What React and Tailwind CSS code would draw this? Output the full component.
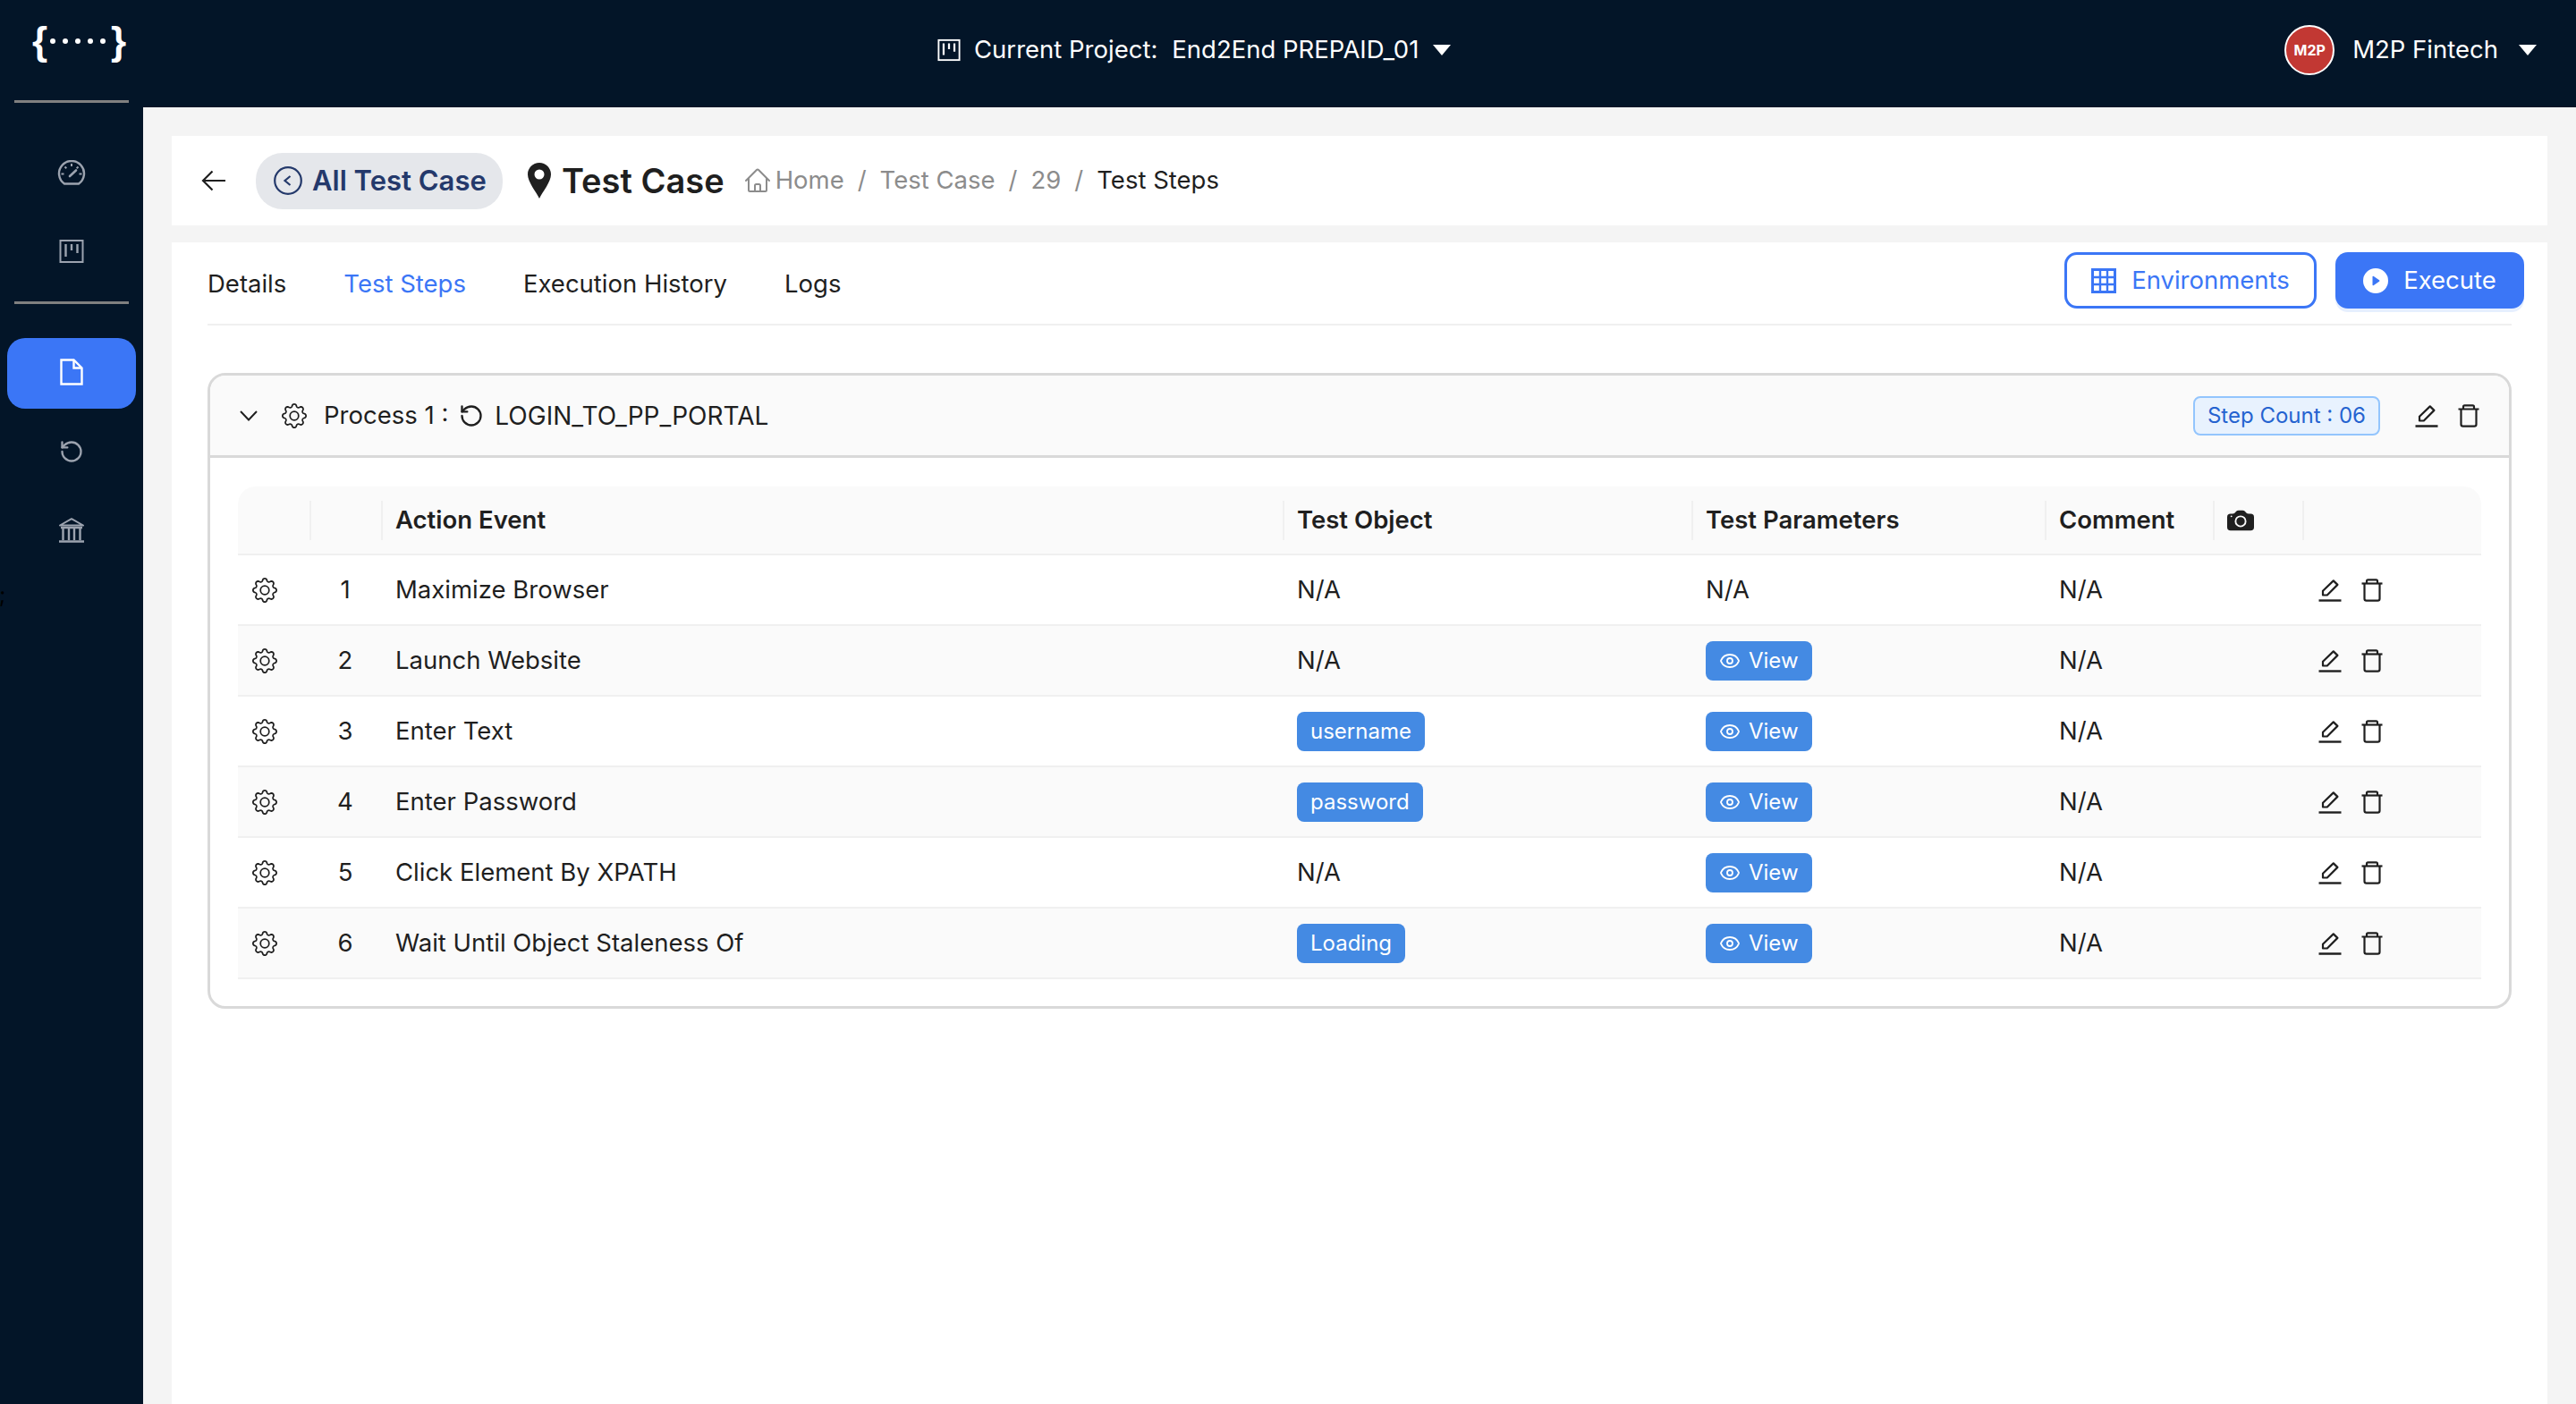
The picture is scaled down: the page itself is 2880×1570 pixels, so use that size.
import { Eye, RotateCcw } from "lucide-react";
import { BsCameraFill, BsGear, BsPlayCircleFill } from "react-icons/bs";
import { HiOutlineHome } from "react-icons/hi2";

const gridCols = "grid grid-cols-[80px_80px_1008px_457px_395px_188px_100px_201px]";

const steps = [
  { id: 1, action: "Maximize Browser", object: null, params: false },
  { id: 2, action: "Launch Website", object: null, params: true },
  { id: 3, action: "Enter Text", object: "username", params: true },
  { id: 4, action: "Enter Password", object: "password", params: true },
  { id: 5, action: "Click Element By XPATH", object: null, params: true },
  { id: 6, action: "Wait Until Object Staleness Of", object: "Loading", params: true },
];

const GaugeIcon = ({ className }) => (
  <svg viewBox="0 0 32 28" className={className} fill="none" stroke="currentColor" strokeWidth="2.4">
    <path d="M8 26.5A14 14 0 1 1 24 26.5Z" strokeLinejoin="round" />
    <path d="M16 4v3M8.5 7.5l1.8 1.8M23.5 7.5l-1.8 1.8M4.5 15.5h3M24.5 15.5h3" strokeWidth="2" />
    <path d="M14 18l7-6.5" strokeWidth="2.6" strokeLinecap="round" />
  </svg>
);

const KanbanIcon = ({ className }) => (
  <svg viewBox="0 0 28 28" className={className} fill="none" stroke="currentColor" strokeWidth="2">
    <rect x="1.5" y="2" width="25" height="24" />
    <path d="M7.5 6v14M14 6v7M20.5 6v10" strokeWidth="2.4" />
  </svg>
);

const FileIcon = ({ className }) => (
  <svg viewBox="0 0 26 30" className={className} fill="none" stroke="currentColor" strokeWidth="2.4">
    <path d="M1.5 1.5h14l9 9v18h-23z" />
    <path d="M15.5 1.5v9h9" />
  </svg>
);

const BankIcon = ({ className }) => (
  <svg viewBox="0 0 30 28" className={className} fill="none" stroke="currentColor">
    <path d="M15 1.2L28 8.5H2z" strokeWidth="2" strokeLinejoin="round" />
    <path d="M3 11h24M1 26.5h28" strokeWidth="2.4" />
    <path d="M5.5 11v14M12 11v14M18 11v14M24.5 11v14" strokeWidth="2.4" />
  </svg>
);

const EditIcon = ({ className }) => (
  <svg viewBox="0 0 26 26" className={className} fill="none" stroke="currentColor" strokeWidth="2.2">
    <path d="M5 18.5v-4.8L16.8 2.4l4.6 4.5L9.8 18.5z" strokeLinejoin="round" />
    <path d="M0.5 24.5h25" strokeWidth="2.4" />
  </svg>
);

const TrashIcon = ({ className }) => (
  <svg viewBox="0 0 24 26" className={className} fill="none" stroke="currentColor" strokeWidth="2.2">
    <path d="M0.5 5.5h23" />
    <path d="M6 5.5V2.8c0-.9.6-1.5 1.5-1.5h9c.9 0 1.5.6 1.5 1.5v2.7" />
    <path d="M3.5 5.5v17c0 1.4.9 2.2 2.2 2.2h12.6c1.3 0 2.2-.8 2.2-2.2v-17" />
  </svg>
);

const TableIcon = ({ className }) => (
  <svg viewBox="0 0 28 28" className={className} fill="none" stroke="currentColor">
    <rect x="1.5" y="1.5" width="25" height="25" strokeWidth="3" />
    <path d="M1 10h26M1 18h26M10 1v26M18 1v26" strokeWidth="2.4" />
  </svg>
);

const CircleBackIcon = ({ className }) => (
  <svg viewBox="0 0 32 32" className={className} fill="none" stroke="currentColor" strokeWidth="2.2">
    <circle cx="16" cy="16" r="14.8" />
    <path d="M18.5 11l-6 5 6 5" />
  </svg>
);

const ArrowIcon = ({ className }) => (
  <svg viewBox="0 0 28 24" className={className} fill="none" stroke="currentColor" strokeWidth="2.2">
    <path d="M27 12H2M12.5 1.5L2 12l10.5 10.5" />
  </svg>
);

const ChevronIcon = ({ className }) => (
  <svg viewBox="0 0 20 12" className={className} fill="none" stroke="currentColor" strokeWidth="2">
    <path d="M1 1l9 9.5L19 1" />
  </svg>
);

const PinIcon = ({ className }) => (
  <svg viewBox="0 0 26 40" className={className} fill="currentColor">
    <path fillRule="evenodd" d="M13 0C5.8 0 0 5.8 0 13c0 8.5 9.5 19.5 13 27 3.5-7.5 13-18.5 13-27C26 5.8 20.2 0 13 0zm0 7.5a5.5 5.5 0 1 1 0 11 5.5 5.5 0 0 1 0-11z" />
  </svg>
);

const Caret = ({ className }) => <span className={`block h-0 w-0 border-x-[10px] border-t-[12px] border-x-transparent border-t-white ${className}`} />;

const Pill = ({ children }) => (
  <span className="flex h-[44px] items-center gap-[9px] rounded-lg bg-[#448ae3] px-[15px] text-[24px] text-white">{children}</span>
);

function Sidebar() {
  const navClass = "flex h-[79px] items-center justify-center rounded-[20px] pb-[2px] text-[#9ca3af]";
  return (
    <aside className="relative flex w-[160px] shrink-0 flex-col bg-[#031528] px-[8px]">
      <div className="flex h-[112px] items-start pl-[28px] pt-[24px] font-['Liberation_Sans',sans-serif] text-white">
        <div className="flex h-[44px] items-center gap-[8px]">
          <span className="-mr-[2px] w-[14px] text-[44px] font-bold leading-none">{"{"}</span>
          {[0, 1, 2, 3, 4].map((dot) => (
            <span key={dot} className="h-[6px] w-[6px] rounded-full bg-white" />
          ))}
          <span className="-ml-[2px] w-[14px] text-[44px] font-bold leading-none">{"}"}</span>
        </div>
      </div>
      <div className="mx-[8px] h-[3px] bg-[#808080]" />
      <nav className="mt-[39px] flex flex-col gap-[9px]">
        <div className={navClass}><GaugeIcon className="h-[28px] w-[32px]" /></div>
        <div className={navClass}><KanbanIcon className="h-[28px] w-[28px]" /></div>
      </nav>
      <div className="mx-[8px] mt-[16px] h-[3px] bg-[#808080]" />
      <nav className="mt-[38px] flex flex-col gap-[9px]">
        <div className="flex h-[79px] items-center justify-center rounded-[20px] bg-[#3b76f6] pb-[3px] text-white"><FileIcon className="h-[32px] w-[26px]" /></div>
        <div className={navClass}><RotateCcw className="h-[28px] w-[28px]" strokeWidth={2} /></div>
        <div className={navClass}><BankIcon className="h-[28px] w-[30px]" /></div>
      </nav>
      <span className="absolute left-[-1px] top-[648px] text-[24px] text-black">;</span>
    </aside>
  );
}

function Header() {
  return (
    <header className="flex h-[120px] shrink-0 items-center justify-between bg-[#031528] pb-[8px] pl-[888px] pr-[44px] text-[27.5px] text-white">
      <div className="flex items-center">
        <KanbanIcon className="h-[26px] w-[26px]" />
        <span className="ml-[15px]">Current Project:</span>
        <span className="ml-[16px]">End2End PREPAID_01</span>
        <Caret className="ml-[16px]" />
      </div>
      <div className="flex items-center">
        <div className="flex h-[56px] w-[56px] items-center justify-center rounded-full border-2 border-white bg-[#c23833] text-[16px] font-bold">M2P</div>
        <span className="ml-[20px]">M2P Fintech</span>
        <Caret className="ml-[23px]" />
      </div>
    </header>
  );
}

function Breadcrumb() {
  return (
    <div className="ml-[21px] flex items-center text-[27.5px] text-[#8c8c8c]">
      <HiOutlineHome className="h-[32px] w-[32px]" />
      <span className="ml-[4px]">Home</span>
      <span className="mx-[15px]">/</span>
      <span>Test Case</span>
      <span className="mx-[15px]">/</span>
      <span>29</span>
      <span className="mx-[15px]">/</span>
      <span className="text-[#1f1f1f]">Test Steps</span>
    </div>
  );
}

function TopBar() {
  return (
    <div className="flex h-[100px] shrink-0 items-center bg-white pl-[33px]">
      <ArrowIcon className="h-[24px] w-[28px] text-[#1f1f1f]" />
      <div className="ml-[33px] flex h-[63px] w-[276px] items-center rounded-[30px] bg-[#e5e7eb] pl-[20px] text-[#24396b]">
        <CircleBackIcon className="h-[32px] w-[32px]" />
        <span className="ml-[11px] text-[31px] font-semibold">All Test Case</span>
      </div>
      <PinIcon className="ml-[28px] h-[40px] w-[26px] text-[#1f1f1f]" />
      <h1 className="ml-[12px] text-[38px] font-semibold text-[#1f1f1f]">Test Case</h1>
      <Breadcrumb />
    </div>
  );
}

function Tabs() {
  const tabClass = "flex h-[93px] items-center border-b-4 border-transparent pt-[4px]";
  return (
    <div className="mx-[40px] flex h-[93px] items-start justify-between border-b-2 border-[#f0f0f0] text-[27.5px] text-[#1f1f1f]">
      <div className="flex gap-[64px]">
        <button type="button" className={tabClass}>Details</button>
        <button type="button" className={`${tabClass} border-[#3b76f6] text-[#3b76f6]`}>Test Steps</button>
        <button type="button" className={tabClass}>Execution History</button>
        <button type="button" className={tabClass}>Logs</button>
      </div>
      <div className="-mr-[14px] mt-[11px] flex gap-[21px]">
        <button type="button" className="flex h-[63px] w-[282px] items-center justify-center gap-[17px] rounded-[14px] border-[3px] border-[#3b76f6] text-[#3b76f6]">
          <TableIcon className="h-[28px] w-[28px]" />
          Environments
        </button>
        <button type="button" className="flex h-[63px] w-[211px] items-center justify-center gap-[17px] rounded-[14px] bg-[#3b76f6] text-white shadow-[0_4px_0_#e6effe]">
          <BsPlayCircleFill className="h-[28px] w-[28px]" />
          Execute
        </button>
      </div>
    </div>
  );
}

function ProcessHeader() {
  return (
    <div className="flex h-[92px] items-center justify-between border-b-[3px] border-[#d9d9d9] bg-[#fafafa] pl-[33px] pr-[33px] text-[27.5px] text-[#1f1f1f]">
      <div className="flex items-center">
        <ChevronIcon className="h-[12px] w-[20px]" />
        <BsGear className="ml-[27px] h-[28px] w-[28px]" />
        <span className="ml-[19px]">Process 1 :</span>
        <RotateCcw className="ml-[12px] h-[28px] w-[28px]" strokeWidth={2} />
        <span className="ml-[12px] text-[28px]">LOGIN_TO_PP_PORTAL</span>
      </div>
      <div className="flex items-center">
        <span className="flex h-[44px] w-[209px] items-center justify-center rounded-lg border-2 border-[#93c5fd] bg-[#e8f2fe] text-[24px] text-[#2563d0]">Step Count : 06</span>
        <EditIcon className="ml-[39px] h-[26px] w-[26px]" />
        <TrashIcon className="ml-[22px] h-[26px] w-[24px]" />
      </div>
    </div>
  );
}

function HeaderCell({ children }) {
  return <div className="flex h-[44px] items-center border-l-2 border-[#f0f0f0] pl-[14px]">{children}</div>;
}

function StepsTable() {
  return (
    <div className="mx-[31px] mt-[32px] text-[27.5px] text-[#1f1f1f]">
      <div className={`${gridCols} h-[77px] items-center rounded-t-[20px] border-b-2 border-[#f0f0f0] bg-[#fafafa] font-semibold`}>
        <div />
        <HeaderCell />
        <HeaderCell>Action Event</HeaderCell>
        <HeaderCell>Test Object</HeaderCell>
        <HeaderCell>Test Parameters</HeaderCell>
        <HeaderCell>Comment</HeaderCell>
        <HeaderCell><BsCameraFill className="h-[30px] w-[30px]" /></HeaderCell>
        <HeaderCell />
      </div>
      {steps.map((step) => (
        <div key={step.id} className={`${gridCols} h-[79px] items-center border-b-2 border-[#f0f0f0] ${step.id % 2 === 0 ? "bg-[#fafafa]" : "bg-white"}`}>
          <div className="pl-[16px]"><BsGear className="h-[28px] w-[28px]" /></div>
          <div className="text-center">{step.id}</div>
          <div className="pl-[16px]">{step.action}</div>
          <div className="flex pl-[16px]">{step.object ? <Pill>{step.object}</Pill> : "N/A"}</div>
          <div className="flex pl-[16px]">
            {step.params ? (
              <Pill>
                <Eye className="h-[24px] w-[24px]" strokeWidth={1.8} />
                View
              </Pill>
            ) : (
              "N/A"
            )}
          </div>
          <div className="pl-[16px]">N/A</div>
          <div />
          <div className="flex items-center gap-[22px] pl-[18px]">
            <EditIcon className="h-[26px] w-[26px]" />
            <TrashIcon className="h-[26px] w-[24px]" />
          </div>
        </div>
      ))}
    </div>
  );
}

export default function App() {
  return (
    <div className="flex h-screen w-screen overflow-hidden font-['Inter',sans-serif]">
      <Sidebar />
      <div className="flex min-w-0 flex-1 flex-col">
        <Header />
        <main className="flex min-h-0 flex-1 flex-col gap-[19px] bg-[#f4f4f4] px-[32px] pt-[32px]">
          <TopBar />
          <section className="flex-1 bg-white">
            <Tabs />
            <div className="mx-[40px] mt-[53px] h-[711px] overflow-hidden rounded-[20px] border-[3px] border-[#d9d9d9]">
              <ProcessHeader />
              <StepsTable />
            </div>
          </section>
        </main>
      </div>
    </div>
  );
}
